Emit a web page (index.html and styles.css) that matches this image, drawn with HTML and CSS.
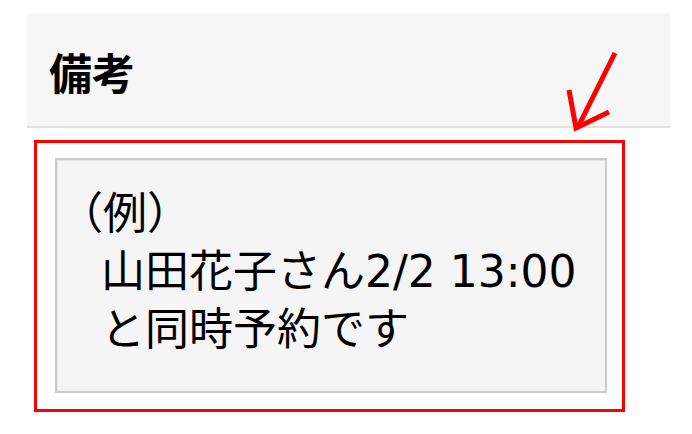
FILE: index.html
```html
<!DOCTYPE html>
<html lang="ja">
<head>
<meta charset="utf-8">
<link rel="stylesheet" href="styles.css">
</head>
<body>
<div class="page">
  <div class="header">
    <h2 class="title">備考</h2>
  </div>
  <div class="highlight">
    <div class="note">
      <div class="line first">（例）</div>
      <div class="line indent">山田花子さん2/2 13:00</div>
      <div class="line indent">と同時予約です</div>
    </div>
  </div>
  <svg class="arrow" width="60" height="90" viewBox="0 0 60 90">
    <path d="M55 5 L18 79" stroke="#f00" stroke-width="5" fill="none" stroke-linecap="butt"/>
    <path d="M9 42 L16 80 L49 64" stroke="#f00" stroke-width="5" fill="none" stroke-linejoin="miter"/>
  </svg>
</div>
</body>
</html>
```
FILE: styles.css
```css
html, body {
  margin: 0;
  padding: 0;
  background: #fff;
}
.page {
  position: relative;
  width: 692px;
  height: 434px;
  padding-top: 13px;
  box-sizing: border-box;
  font-family: "DejaVu Sans", "Noto Sans CJK JP", sans-serif;
  color: #000;
}
.header {
  margin-left: 27px;
  width: 643px;
  height: 113px;
  background: #f6f6f6;
  border-bottom: 2px solid #e2e2e2;
  display: flex;
  align-items: center;
}
.title {
  margin: 0 0 0 22px;
  font-family: "Noto Sans CJK JP", sans-serif;
  font-size: 43px;
  font-weight: 700;
  line-height: 1;
  padding-top: 3px;
}
.highlight {
  margin: 12px 0 0 34px;
  width: 591px;
  height: 272px;
  box-sizing: border-box;
  border: 3px solid #f00;
  padding: 15px 15px 16px 18px;
}
.note {
  height: 100%;
  box-sizing: border-box;
  border: 2px solid #cacaca;
  background: #f5f5f5;
  box-shadow: inset 1px 1px 1px rgba(0, 0, 0, 0.06);
  padding: 25px 10px 0 2px;
}
.line {
  font-size: 44px;
  line-height: 58px;
  white-space: nowrap;
}
.indent {
  padding-left: 42px;
}
.arrow {
  position: absolute;
  left: 560px;
  top: 48px;
}
```
